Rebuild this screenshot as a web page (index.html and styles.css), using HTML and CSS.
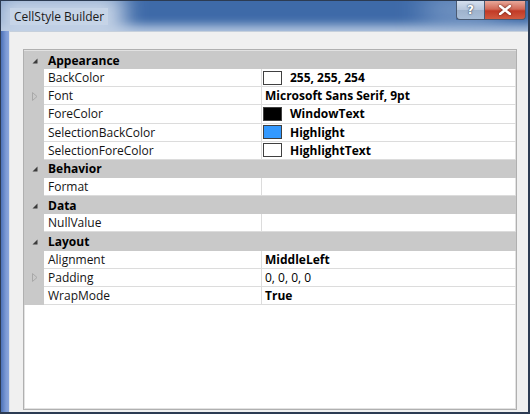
FILE: index.html
```html
<!DOCTYPE html>
<html>
<head>
<meta charset="utf-8">
<link rel="stylesheet" href="styles.css">
</head>
<body>
<div class="window">
  <div class="titlebar">
    <span class="title">CellStyle Builder</span>
    <div class="caption-buttons">
      <div class="btn help">?</div>
      <div class="btn close">
        <svg width="12" height="10" viewBox="0 0 12 10"><path d="M1 1 L11 9 M11 1 L1 9" stroke="#fff" stroke-width="2.6" stroke-linecap="square"/></svg>
      </div>
    </div>
  </div>
  <div class="client">
    <div class="grid">
      <div class="cat"><span class="glyph"><svg width="6" height="6" viewBox="0 0 6 6"><polygon points="5.5,0.5 5.5,5.5 0.5,5.5" fill="#3c3c3c"/></svg></span><span class="cat-name">Appearance</span></div>
      <div class="row"><span class="margin"></span><span class="name">BackColor</span><span class="value bold"><i class="swatch" style="background:#fffffe"></i>255, 255, 254</span></div>
      <div class="row"><span class="margin"><svg class="exp" width="6" height="9" viewBox="0 0 6 9"><polygon points="0.5,0.5 5,4.5 0.5,8.5" fill="none" stroke="#a8a8a8"/></svg></span><span class="name">Font</span><span class="value bold nopad">Microsoft Sans Serif, 9pt</span></div>
      <div class="row"><span class="margin"></span><span class="name">ForeColor</span><span class="value bold"><i class="swatch" style="background:#000000"></i>WindowText</span></div>
      <div class="row"><span class="margin"></span><span class="name">SelectionBackColor</span><span class="value bold"><i class="swatch" style="background:#3399ff"></i>Highlight</span></div>
      <div class="row"><span class="margin"></span><span class="name">SelectionForeColor</span><span class="value bold"><i class="swatch" style="background:#ffffff"></i>HighlightText</span></div>
      <div class="cat"><span class="glyph"><svg width="6" height="6" viewBox="0 0 6 6"><polygon points="5.5,0.5 5.5,5.5 0.5,5.5" fill="#3c3c3c"/></svg></span><span class="cat-name">Behavior</span></div>
      <div class="row"><span class="margin"></span><span class="name">Format</span><span class="value"></span></div>
      <div class="cat"><span class="glyph"><svg width="6" height="6" viewBox="0 0 6 6"><polygon points="5.5,0.5 5.5,5.5 0.5,5.5" fill="#3c3c3c"/></svg></span><span class="cat-name">Data</span></div>
      <div class="row"><span class="margin"></span><span class="name">NullValue</span><span class="value"></span></div>
      <div class="cat"><span class="glyph"><svg width="6" height="6" viewBox="0 0 6 6"><polygon points="5.5,0.5 5.5,5.5 0.5,5.5" fill="#3c3c3c"/></svg></span><span class="cat-name">Layout</span></div>
      <div class="row"><span class="margin"></span><span class="name">Alignment</span><span class="value bold nopad">MiddleLeft</span></div>
      <div class="row"><span class="margin"><svg class="exp" width="6" height="9" viewBox="0 0 6 9"><polygon points="0.5,0.5 5,4.5 0.5,8.5" fill="none" stroke="#a8a8a8"/></svg></span><span class="name">Padding</span><span class="value nopad">0, 0, 0, 0</span></div>
      <div class="row"><span class="margin"></span><span class="name">WrapMode</span><span class="value bold nopad">True</span></div>
    </div>
  </div>
</div>
</body>
</html>
```

FILE: styles.css
```css
html, body {
  margin: 0;
  padding: 0;
  background: #ffffff;
}

.window {
  width: 530px;
  height: 414px;
  box-sizing: border-box;
  border: 1px solid #2c3b52;
  border-right-width: 2px;
  border-bottom-width: 2px;
  display: flex;
  flex-direction: column;
  background-color: #b9c9e4;
  background-image: linear-gradient(90deg, #4c72b8 0px, #7d9bd6 5px, #8aa6dc 8px, #b9c9e4 9px);
  font-family: "Open Sans", "DejaVu Sans", sans-serif;
}

.titlebar {
  height: 30px;
  flex: none;
  display: flex;
  justify-content: space-between;
  align-items: flex-start;
  overflow: hidden;
  background-color: #3e6aa8;
  box-shadow: inset 0 -12px 10px -6px rgba(196, 211, 232, 0.85);
}

.title {
  font-family: "Open Sans", "DejaVu Sans", sans-serif;
  font-size: 12px;
  color: #1a1a1a;
  margin: 7px 0 0 9px;
  padding: 0 4px;
  background-color: #c6d4e7;
  box-shadow: 0 0 22px 16px #c6d4e7;
}

.caption-buttons {
  display: flex;
  margin-right: 2px;
  box-shadow: -30px 0 30px 2px rgba(150, 176, 212, 0.9);
}

.btn {
  height: 19px;
  display: flex;
  align-items: center;
  justify-content: center;
  box-sizing: border-box;
  border: 1px solid #4a5a72;
  border-top: none;
}

.help {
  width: 28px;
  border-radius: 0 0 0 4px;
  background-color: #b4c4da;
  background-image: linear-gradient(180deg, #d4dfee 0%, #b6c6dc 50%, #9eb2cc 51%, #a9bed8 100%);
  color: #ffffff;
  font-family: "DejaVu Sans", sans-serif;
  font-weight: bold;
  font-size: 12px;
  text-shadow: 0 0 2px #35465e, 0 0 1px #35465e;
  border-right: none;
}

.close {
  width: 42px;
  border-radius: 0 0 4px 0;
  background-color: #c84a34;
  background-image: linear-gradient(180deg, #e8a89a 0%, #d26a58 45%, #c23a26 55%, #d05a40 100%);
}

.close svg {
  filter: drop-shadow(0 0 1px #5a1a10);
}

.client {
  flex: 1;
  margin-left: 8px;
  background: #f0f0f0;
  border-top: 1px solid #c6d0dc;
  border-left: 1px solid #dde3ea;
  padding: 17px 11px 2px 13px;
  display: flex;
}

.grid {
  flex: 1;
  background: #ffffff;
  border: 1px solid #b0b0b0;
  box-shadow: inset 0 0 0 1px #e2e2e2;
  display: flex;
  flex-direction: column;
  padding-top: 1px;
}

.cat {
  height: 18.15px;
  box-sizing: border-box;
  background: #c9c9c9;
  display: flex;
  align-items: center;
  font-weight: bold;
  font-size: 12px;
  color: #000;
}

.glyph {
  width: 20px;
  display: flex;
  justify-content: center;
  padding-top: 1px;
  padding-left: 2px;
  box-sizing: border-box;
}

.cat-name {
  padding-left: 4px;
}

.row {
  height: 18.15px;
  box-sizing: border-box;
  display: grid;
  grid-template-columns: 20px 218px 1fr;
  font-size: 12px;
  color: #141414;
}

.margin {
  background: #c9c9c9;
  display: flex;
  align-items: center;
  justify-content: center;
  padding-left: 2px;
}

.name {
  border-bottom: 1px solid #dcdcdc;
  border-right: 1px solid #dcdcdc;
  padding-left: 4px;
  display: flex;
  align-items: center;
  background: #fff;
  white-space: nowrap;
}

.value {
  border-bottom: 1px solid #dcdcdc;
  display: flex;
  align-items: center;
  padding-left: 1px;
  white-space: nowrap;
  color: #000;
}

.value.nopad {
  padding-left: 3px;
}

.bold {
  font-weight: bold;
}

.swatch {
  display: inline-block;
  width: 17px;
  height: 12px;
  border: 1px solid #404040;
  margin-right: 8px;
  flex: none;
}
```
